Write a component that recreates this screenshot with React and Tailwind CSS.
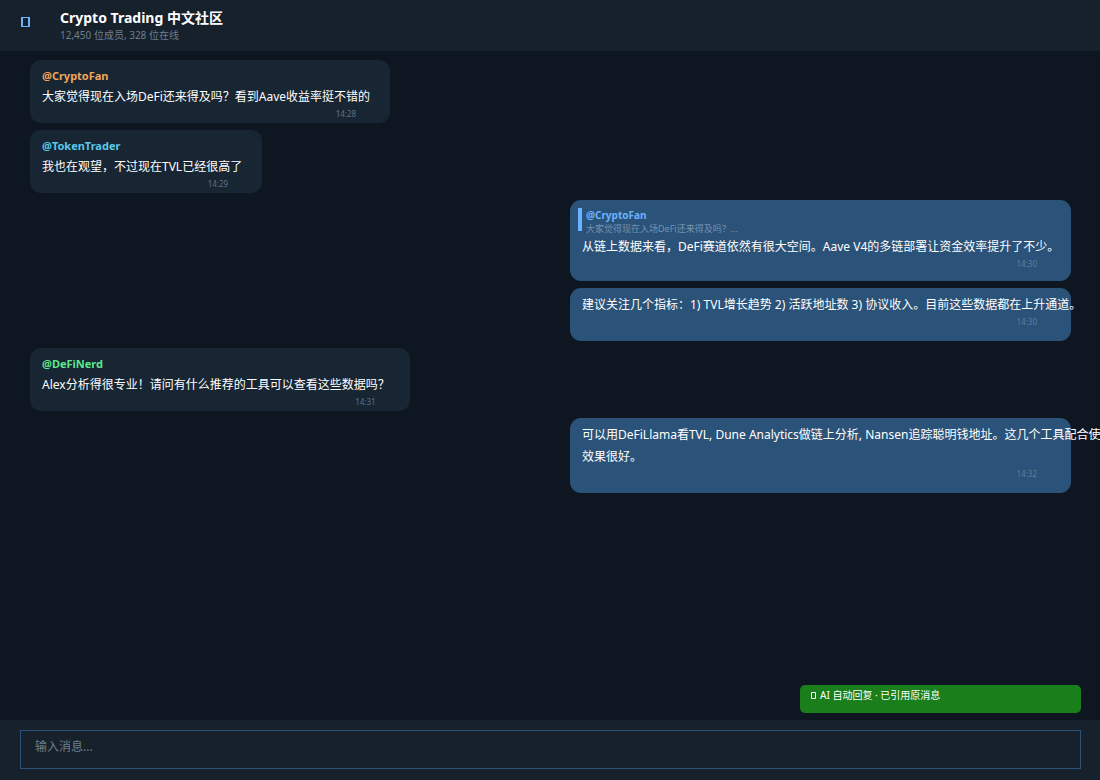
const sans = 'font-["Noto_Sans","Noto_Sans_CJK_SC",sans-serif]';

const messages = [
  {
    id: 1,
    name: "@CryptoFan",
    color: "text-[#f0a55a]",
    lines: ["大家觉得现在入场DeFi还来得及吗？看到Aave收益率挺不错的"],
    time: "14:28",
  },
  {
    id: 2,
    name: "@TokenTrader",
    color: "text-[#5ac8e8]",
    lines: ["我也在观望，不过现在TVL已经很高了"],
    time: "14:29",
  },
  {
    id: 3,
    own: true,
    quote: { name: "@CryptoFan", text: "大家觉得现在入场DeFi还来得及吗？..." },
    lines: ["从链上数据来看，DeFi赛道依然有很大空间。Aave V4的多链部署让资金效率提升了不少。"],
    time: "14:30",
  },
  {
    id: 4,
    own: true,
    lines: ["建议关注几个指标：1) TVL增长趋势 2) 活跃地址数 3) 协议收入。目前这些数据都在上升通道。"],
    time: "14:30",
  },
  {
    id: 5,
    name: "@DeFiNerd",
    color: "text-[#5ee68c]",
    lines: ["Alex分析得很专业！请问有什么推荐的工具可以查看这些数据吗？"],
    time: "14:31",
  },
  {
    id: 6,
    own: true,
    lines: [
      "可以用DeFiLlama看TVL, Dune Analytics做链上分析, Nansen追踪聪明钱地址。这几个工具配合使",
      "效果很好。",
    ],
    time: "14:32",
  },
];

function IncomingMessage({ message }) {
  return (
    <li className="self-start rounded-[11px] bg-[#182533] pt-2 pr-5 pb-1 pl-3">
      <p className={`text-[11px] leading-4 font-bold ${message.color}`}>{message.name}</p>
      <div className="pt-0.5 text-xs leading-[22px] whitespace-nowrap text-white">
        {message.lines.map((line) => (
          <p key={line}>{line}</p>
        ))}
      </div>
      <time className="block pr-[14px] text-right text-[8px] leading-[11px] text-[#5f7487]">
        {message.time}
      </time>
    </li>
  );
}

function OwnMessage({ message }) {
  return (
    <li
      className={`w-full max-w-[501px] self-end rounded-[11px] bg-[#2b5278] pt-[6px] pl-3 ${message.quote ? "pb-3" : "pb-[14px]"}`}
    >
      {message.quote && (
        <blockquote className="mt-0.5 -ml-1 h-[23px] border-l-4 border-[#6ab3ff] pl-1 whitespace-nowrap">
          <p className="text-[10px] leading-[14px] font-bold text-[#6ab3ff]">{message.quote.name}</p>
          <p className="text-[9px] leading-[14px] text-[#7393b3]">{message.quote.text}</p>
        </blockquote>
      )}
      <div className={`text-xs leading-[22px] whitespace-nowrap text-white ${message.quote ? "pt-[5px]" : ""}`}>
        {message.lines.map((line) => (
          <p key={line}>{line}</p>
        ))}
      </div>
      <time className="block pr-[34px] text-right text-[8px] leading-[11px] text-[#5f7f9c]">
        {message.time}
      </time>
    </li>
  );
}

export default function App() {
  return (
    <div className={`flex min-h-screen flex-col overflow-hidden bg-[#0e1621] ${sans}`}>
      <header className="flex items-start gap-[30px] bg-[#17212b] pt-2 pb-[9px] pl-5">
        <button type="button" aria-label="返回" className="mt-2 text-[#6ab3ff]">
          <svg width="10" height="12" viewBox="0 0 10 12" fill="currentColor">
            <path fillRule="evenodd" d="M1 1h9v10H1zM3 2v8h5V2z" />
          </svg>
        </button>
        <div>
          <h1 className="text-sm leading-5 font-bold text-white">Crypto Trading 中文社区</h1>
          <p className="text-[10px] leading-[14px] text-[#6c7f8f]">12,450 位成员, 328 位在线</p>
        </div>
      </header>

      <main className="flex flex-1 flex-col pt-[9px] pb-[7px]">
        <ul className="flex flex-1 flex-col gap-[7px] pr-[29px] pl-[30px]">
          {messages.map((message) =>
            message.own ? (
              <OwnMessage key={message.id} message={message} />
            ) : (
              <IncomingMessage key={message.id} message={message} />
            ),
          )}
        </ul>
        <p
          role="status"
          className="mr-[19px] flex h-7 w-[281px] items-start gap-1 self-end rounded-[5px] bg-[#1a7f1a] pt-0.5 pl-[10px] text-[10px] leading-4 text-white"
        >
          <svg className="mt-[5px]" width="6" height="7" viewBox="0 0 6 7" fill="none" stroke="currentColor" aria-hidden="true">
            <path d="M1.5.5h4v6h-4z" />
          </svg>
          AI 自动回复 · 已引用原消息
        </p>
      </main>

      <footer className="bg-[#17212b] pt-[10px] pr-[19px] pb-[11px] pl-5">
        <input
          type="text"
          aria-label="输入消息"
          placeholder="输入消息..."
          className="block h-[39px] w-full border border-[#2b5278] bg-transparent px-[14px] pb-[6px] text-xs text-white outline-none placeholder:text-[#6c7f8f]"
        />
      </footer>
    </div>
  );
}
